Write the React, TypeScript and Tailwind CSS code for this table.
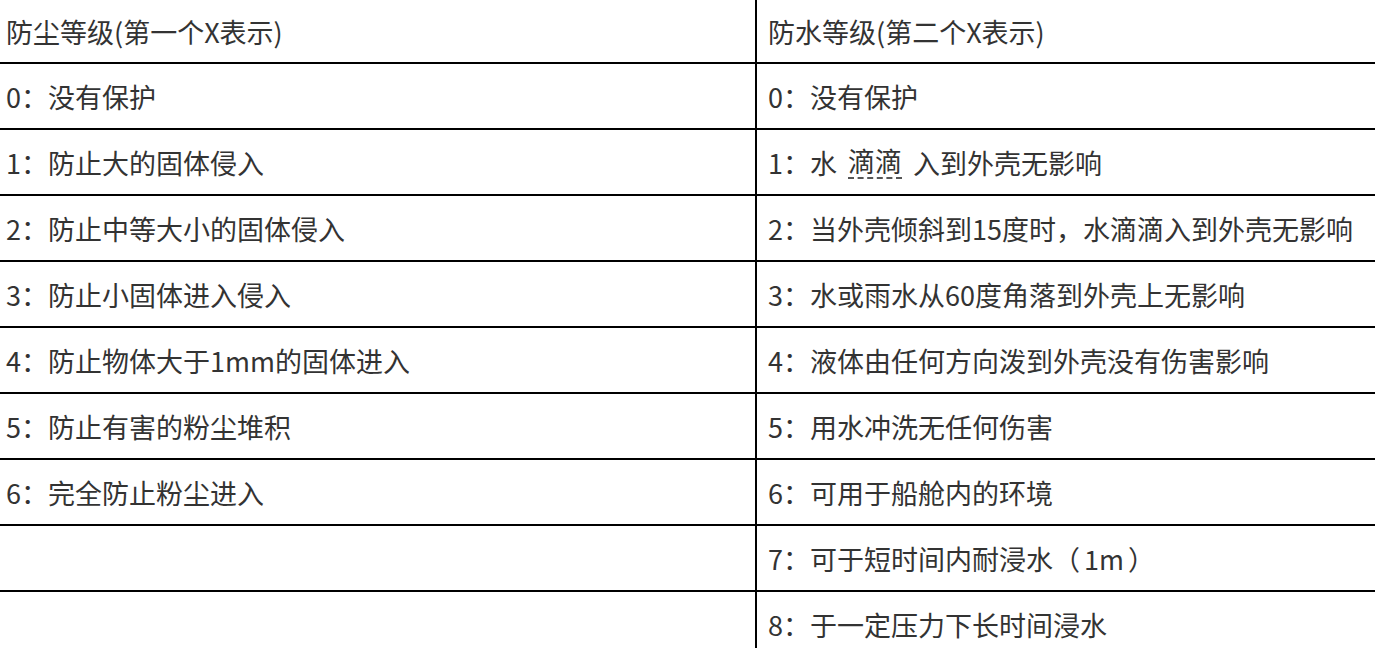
const dust = [
  "0：没有保护",
  "1：防止大的固体侵入",
  "2：防止中等大小的固体侵入",
  "3：防止小固体进入侵入",
  "4：防止物体大于1mm的固体进入",
  "5：防止有害的粉尘堆积",
  "6：完全防止粉尘进入",
  "",
  "",
];

const water: React.ReactNode[] = [
  "0：没有保护",
  <>
    1：水
    <span className="mx-[11px] border-b-2 border-dashed border-[#555] pb-[3px]">滴滴</span>
    入到外壳无影响
  </>,
  "2：当外壳倾斜到15度时，水滴滴入到外壳无影响",
  "3：水或雨水从60度角落到外壳上无影响",
  "4：液体由任何方向泼到外壳没有伤害影响",
  "5：用水冲洗无任何伤害",
  "6：可用于船舱内的环境",
  <>
    7：可于短时间内耐浸水（<span className="mx-[4px]">1m</span>）
  </>,
  "8：于一定压力下长时间浸水",
];

function Row({ left, right, header }: { left: React.ReactNode; right: React.ReactNode; header?: boolean }) {
  return (
    <div className={`flex border-b-2 border-black ${header ? "h-[64px]" : "h-[66px]"}`}>
      <div className={`w-[755px] shrink-0 flex items-center pl-[6px] ${header ? "" : "pt-[1px]"}`}>{left}</div>
      <div className={`flex-1 flex items-center pl-[11px] border-l-2 border-black ${header ? "" : "pt-[1px]"}`}>
        {right}
      </div>
    </div>
  );
}

export default function App() {
  return (
    <div
      className="w-[1375px] h-[648px] overflow-hidden bg-white text-[#333] text-[27px] leading-none"
      style={{ fontFamily: '"Noto Sans CJK SC", "Noto Sans", sans-serif' }}
    >
      <Row header left="防尘等级(第一个X表示)" right="防水等级(第二个X表示)" />
      {dust.map((d, i) => (
        <Row key={i} left={d} right={water[i]} />
      ))}
    </div>
  );
}
